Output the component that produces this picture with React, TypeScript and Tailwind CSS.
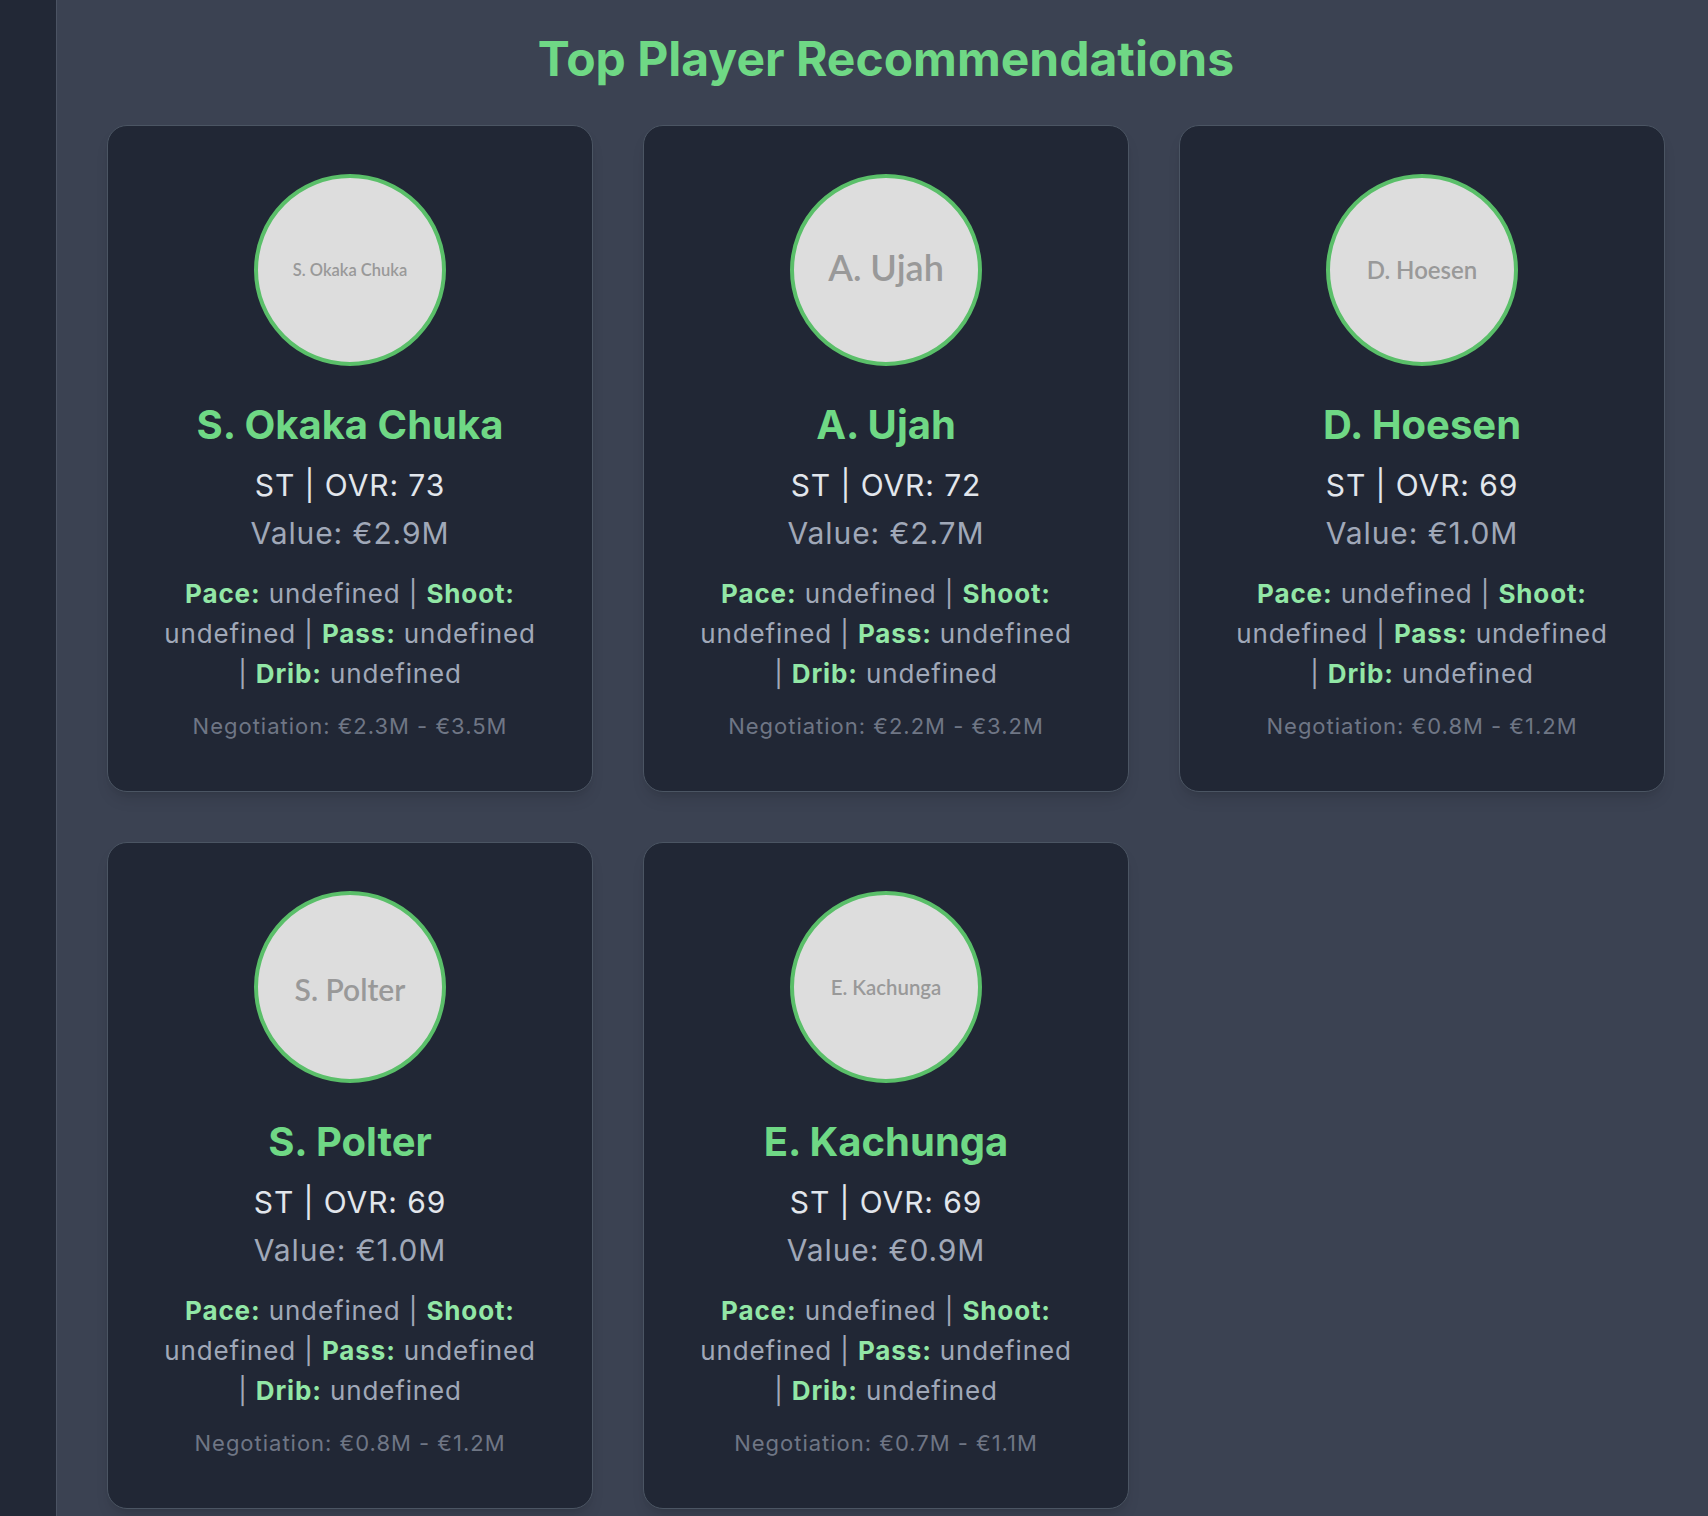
import React from 'react'

type Player = {
  name: string
  ovr: number
  value: string
  nego: string
  avatarText: string
}

// placeholder text is sized to fit the circle, so every name gets its own size
const PLAYERS: Player[] = [
  { name: 'S. Okaka Chuka', ovr: 73, value: '€2.9M', nego: '€2.3M - €3.5M', avatarText: 'text-[16.5px]' },
  { name: 'A. Ujah', ovr: 72, value: '€2.7M', nego: '€2.2M - €3.2M', avatarText: 'text-[36px] -translate-y-[3px]' },
  { name: 'D. Hoesen', ovr: 69, value: '€1.0M', nego: '€0.8M - €1.2M', avatarText: 'text-[24px]' },
  { name: 'S. Polter', ovr: 69, value: '€1.0M', nego: '€0.8M - €1.2M', avatarText: 'text-[30px] translate-y-[2px]' },
  { name: 'E. Kachunga', ovr: 69, value: '€0.9M', nego: '€0.7M - €1.1M', avatarText: 'text-[20.4px]' },
]

const STATS = ['Pace', 'Shoot', 'Pass', 'Drib']

function PlayerCard({ p }: { p: Player }) {
  return (
    <div className="flex flex-col items-center rounded-[20px] border border-[#4b5563] bg-[#212735] pt-[48px] pb-[54px] text-center shadow-lg">
      <div className="flex h-[192px] w-[192px] items-center justify-center rounded-full border-4 border-[#5abf69] bg-[#dddddd]">
        <span className={`font-['Lato',sans-serif] font-semibold text-[#999999] ${p.avatarText}`}>{p.name}</span>
      </div>
      <h3 className="mt-[39px] text-[40px] font-bold leading-none text-[#6fd885]">{p.name}</h3>
      <p className="mt-[25px] text-[30px] leading-none tracking-[0.03em] text-[#e2e6ec]">ST | OVR: {p.ovr}</p>
      <p className="mt-[18px] text-[30px] leading-none tracking-[0.03em] text-[#a0a8b8]">Value: {p.value}</p>
      <p className="mt-[26px] w-[380px] text-[26px] leading-[40px] tracking-[0.033em] text-[#a0a8b8]">
        {STATS.map((s, i) => (
          <React.Fragment key={s}>
            {i > 0 && ' | '}
            <b className="font-bold text-[#92e7a6]">{s}:</b> undefined
          </React.Fragment>
        ))}
      </p>
      <p className="mt-[21px] text-[22px] leading-none tracking-[0.045em] text-[#6f7685]">Negotiation: {p.nego}</p>
    </div>
  )
}

export default function App() {
  return (
    <div className="flex min-h-screen bg-[#3b4252] font-['Inter','Noto_Sans',sans-serif]">
      <aside className="w-[57px] shrink-0 border-r border-[#4b5363] bg-[#222836]" />
      <main className="flex-1 pl-[50px] pr-[43px] pt-[35px] pb-[50px]">
        <h1 className="mb-[42px] text-center text-[48px] font-bold leading-none text-[#6fd885]">
          Top Player Recommendations
        </h1>
        <div className="grid grid-cols-[repeat(3,486px)] gap-[50px]">
          {PLAYERS.map(p => (
            <PlayerCard key={p.name} p={p} />
          ))}
        </div>
      </main>
    </div>
  )
}
